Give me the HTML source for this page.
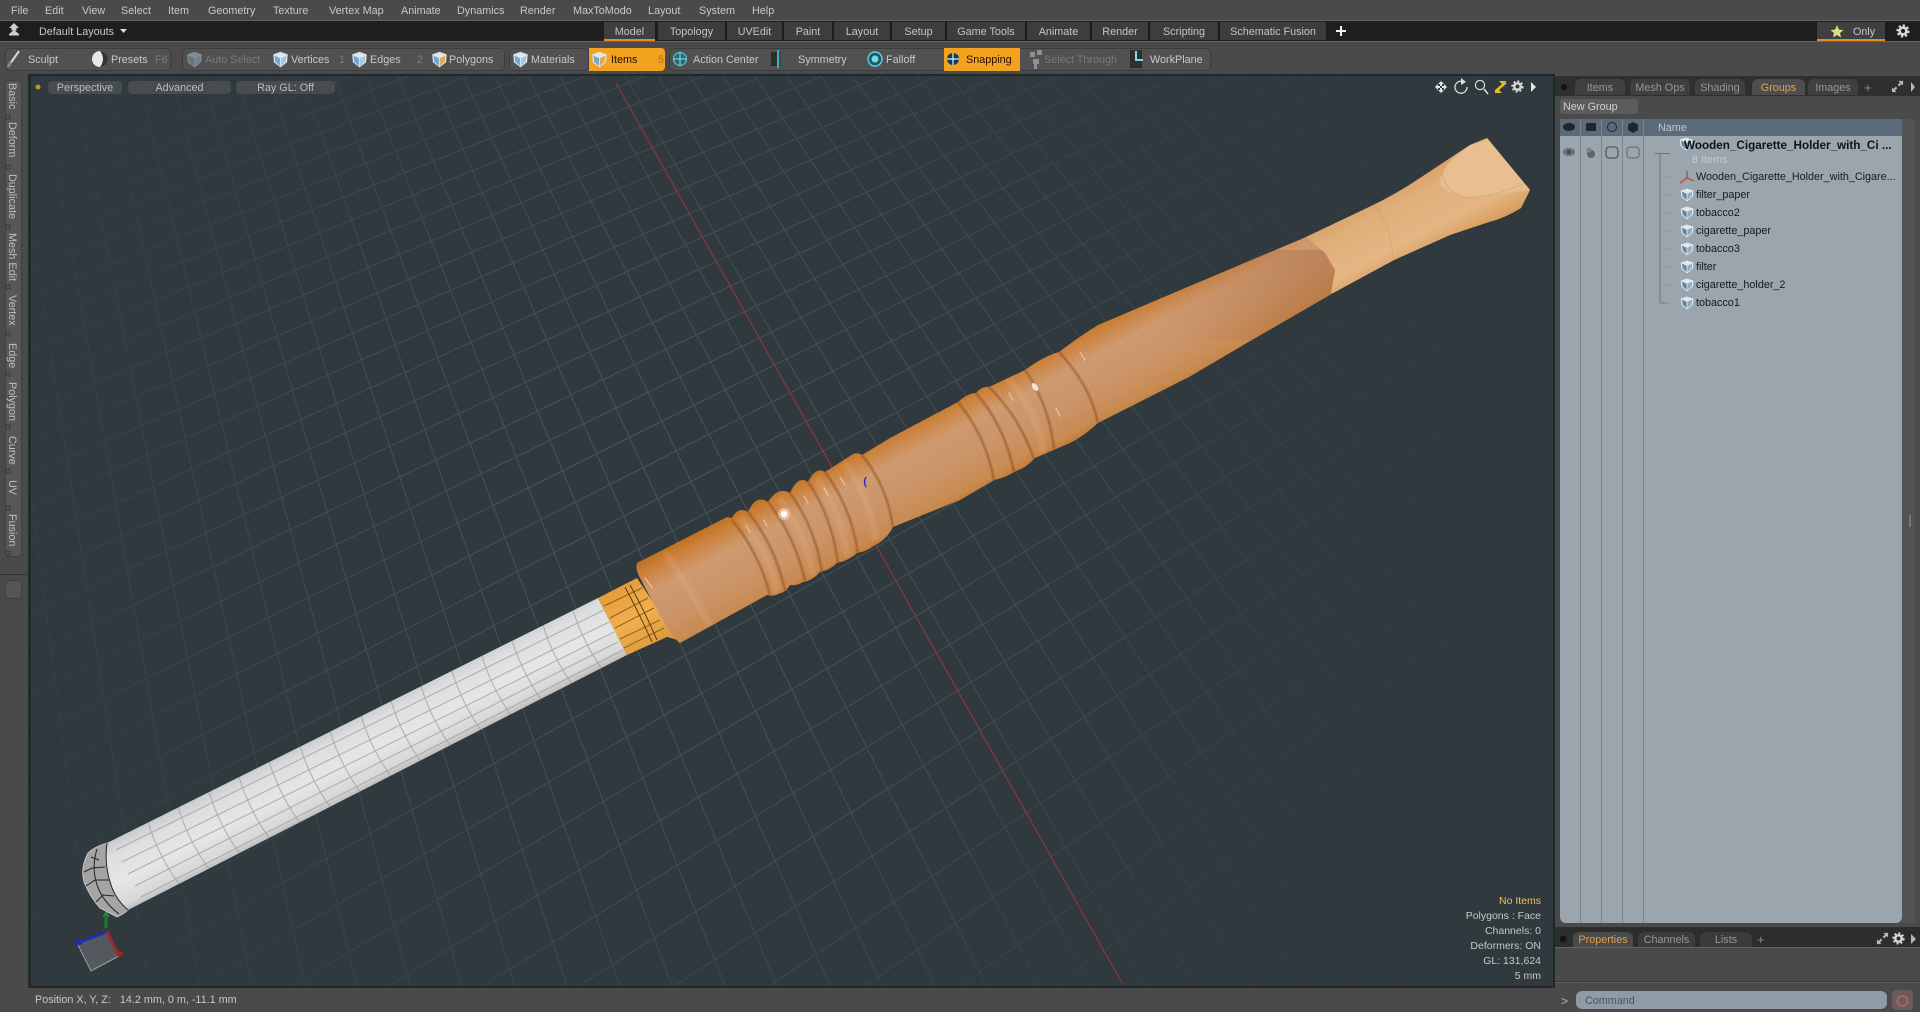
<!DOCTYPE html>
<html lang="en">
<head>
<meta charset="utf-8">
<title>Modo viewport</title>
<style>
html,body{margin:0;padding:0;background:#4a4a4a;width:1920px;height:1012px;overflow:hidden;}
#r{position:relative;width:1920px;height:1012px;overflow:hidden;background:#4a4a4a;font:10.8px/16px "Liberation Sans",sans-serif;color:#c8c8c8;}
.t{position:absolute;white-space:nowrap;line-height:16px;}
.b{position:absolute;box-sizing:border-box;}
.tab{position:absolute;top:22px;height:18px;background:#3d3d3d;color:#c4c4c4;text-align:center;line-height:20px;white-space:nowrap;}
.grp{position:absolute;top:48px;height:23px;background:#515151;border:1px solid #3c3c3c;border-radius:5px;box-sizing:border-box;}
.tb{top:52px;color:#c8c8c8;}
.dim{color:#7a7a7a;}
.vb{position:absolute;top:81px;height:13px;background:#464c4f;border-radius:4px;color:#bdbdbd;text-align:center;line-height:15px;white-space:nowrap;}
.side{position:absolute;left:4px;width:16px;writing-mode:vertical-rl;white-space:nowrap;line-height:16px;color:#c0c0c0;}
.ptab{position:absolute;background:#404040;color:#969696;text-align:center;border-radius:6px 6px 0 0;white-space:nowrap;}
.row{position:absolute;left:1696px;color:#141a1f;white-space:nowrap;line-height:16px;}
.i{right:379px;font-size:10.5px;}
svg{position:absolute;}
</style>
</head>
<body>
<div id="r">

<!-- viewport + model -->
<svg style="left:0;top:0" width="1920" height="1012" viewBox="0 0 1920 1012">
<defs>
<symbol id="cube" viewBox="0 0 16 16"><path d="M8 .8 14.8 3.2 14.2 10.6 8 15.4 1.8 10.6 1.2 3.2Z" fill="#dfe7ec"/><path d="M2.4 4.4 7.6 6.8 7.6 14.2 3 10.2Z" fill="#6fa8d2"/><path d="M13.6 4.4 8.4 6.8 8.4 14.2 13 10.2Z" fill="#a9c8dc"/></symbol>
<symbol id="cubeo" viewBox="0 0 16 16"><path d="M8 .8 14.8 3.2 14.2 10.6 8 15.4 1.8 10.6 1.2 3.2Z" fill="#dfe7ec"/><path d="M2.4 4.4 7.6 6.8 7.6 14.2 3 10.2Z" fill="#6fa8d2"/><path d="M13.6 4.4 8.4 6.8 8.4 14.2 13 10.2Z" fill="#e8a94e"/></symbol>
<symbol id="tcube" viewBox="0 0 14 14"><path d="M7 .6 13.4 2.6 12.8 8.8 7 13.4 1.6 9 .8 2.6Z" fill="#e3e9ed"/><path d="M2 3.6 6.6 5.6 6.6 12 2.8 8.6Z" fill="#5f87a6"/><path d="M12.2 3.6 7.4 5.6 7.4 12 11.6 8.6Z" fill="#8fadc2"/></symbol>
<symbol id="gear" viewBox="0 0 14 14"><circle cx="7" cy="7" r="5.3" fill="none" stroke="#d8d8d8" stroke-width="2.6" stroke-dasharray="2.1 2"/><circle cx="7" cy="7" r="3.4" fill="none" stroke="#d8d8d8" stroke-width="2.6"/></symbol>
<symbol id="exp" viewBox="0 0 14 14"><path d="M8 1H13V6L11.3 4.3 8.8 6.8 7.2 5.2 9.7 2.7ZM1 8V13H6L4.3 11.3 6.8 8.8 5.2 7.2 2.7 9.7Z" fill="#b8b8b8"/></symbol>
<clipPath id="vp"><rect x="31" y="76" width="1522" height="910"/></clipPath>
<radialGradient id="gf" gradientUnits="userSpaceOnUse" cx="680" cy="520" r="1000"><stop offset="0" stop-color="#fff"/><stop offset=".35" stop-color="#fff" stop-opacity=".75"/><stop offset=".6" stop-color="#fff" stop-opacity=".28"/><stop offset=".85" stop-color="#fff" stop-opacity=".08"/><stop offset="1" stop-color="#fff" stop-opacity=".04"/></radialGradient>
<mask id="gm" maskUnits="userSpaceOnUse" x="0" y="0" width="1920" height="1012"><rect width="1920" height="1012" fill="url(#gf)"/></mask>
<linearGradient id="wg" gradientUnits="userSpaceOnUse" x1="975" y1="383" x2="1025" y2="477"><stop offset="0" stop-color="#c0701f"/><stop offset=".1" stop-color="#cc8038"/><stop offset=".3" stop-color="#cf9a70"/><stop offset=".6" stop-color="#cc9569"/><stop offset=".85" stop-color="#c98a50"/><stop offset=".97" stop-color="#c2701f"/><stop offset="1" stop-color="#9a5a20"/></linearGradient>
<linearGradient id="mg" gradientUnits="userSpaceOnUse" x1="1385" y1="185" x2="1425" y2="262"><stop offset="0" stop-color="#d89c62"/><stop offset=".3" stop-color="#e0b07c"/><stop offset=".7" stop-color="#e4b683"/><stop offset="1" stop-color="#d69858"/></linearGradient>
<linearGradient id="dk" gradientUnits="userSpaceOnUse" x1="1150" y1="310" x2="1330" y2="215"><stop offset="0" stop-color="#8a4a20" stop-opacity="0"/><stop offset="1" stop-color="#8a4a20" stop-opacity=".28"/></linearGradient>
<linearGradient id="cg" gradientUnits="userSpaceOnUse" x1="340" y1="722" x2="374" y2="788"><stop offset="0" stop-color="#c8c8cb"/><stop offset=".2" stop-color="#dedee0"/><stop offset=".55" stop-color="#e6e6e7"/><stop offset=".85" stop-color="#d8d8d9"/><stop offset="1" stop-color="#b4b4b5"/></linearGradient>
<linearGradient id="fg" gradientUnits="userSpaceOnUse" x1="615" y1="590" x2="649" y2="650"><stop offset="0" stop-color="#e59c3a"/><stop offset=".5" stop-color="#f1b050"/><stop offset="1" stop-color="#dc9a3a"/></linearGradient>
<pattern id="grain" patternUnits="userSpaceOnUse" width="6" height="6" patternTransform="rotate(-27)"><rect x="0" width="1" height="6" fill="#7a4a1e"/></pattern>
<filter id="bl" x="-20%" y="-20%" width="140%" height="140%"><feGaussianBlur stdDeviation="0.9"/></filter>
<filter id="bl2" x="-20%" y="-20%" width="140%" height="140%"><feGaussianBlur stdDeviation="2.2"/></filter>
<clipPath id="cc"><path d="M107 843 598 598 627 655 128 910 116 900 111 885 104 865Z"/></clipPath>
<clipPath id="hc"><path id="hp" d="M637 563 727 517 732 518Q738 506 748 512 756 494 768 502 778 486 790 493 798 475 808 482 816 466 825 472L853 454Q858 452 862 455L890 438 958 402Q968 393 976 393 982 386 989 387L1025 370Q1044 356 1059 352 1080 336 1098 325L1197 283 1306 237 1367 208Q1395 195 1420 178L1470 145 1487 138 1530 190 1521 208Q1505 218 1489 222L1450 235 1394 260 1335 292 1252 340 1189 377 1098 423Q1084 436 1070 443L1035 458Q1026 468 1016 471 1005 478 994 480L960 500 893 527Q886 540 875 545 866 552 857 553 848 561 837 563 830 570 820 572 812 581 803 582 797 586 790 585 785 593 780 593 774 597 767 595L680 643Q672 638 657 610L640 578Q635 569 637 563Z"/></clipPath>
</defs>

<rect x="28" y="74" width="1527" height="914" fill="#1f292c"/>
<rect x="31" y="76" width="1522" height="910" fill="#30393d"/>
<g clip-path="url(#vp)">
<g mask="url(#gm)" fill="none" stroke="#4a565b" stroke-width="1">
<path d="M31 879L43 986M31 496L95 986M31 223L148 986M41 76L200 986M73 76L252 986M106 76L305 986M138 76L357 986M171 76L410 986M203 76L462 986M236 76L515 986M268 76L567 986M301 76L620 986M333 76L672 986M366 76L725 986M398 76L777 986M431 76L830 986M463 76L882 986M495 76L935 986M528 76L987 986M560 76L1040 986M593 76L1092 986M625 76L1145 986M658 76L1197 986M690 76L1250 986M723 76L1302 986M755 76L1355 986M787 76L1407 986M820 76L1460 986M852 76L1512 986M885 76L1553 970M917 76L1553 902M950 76L1553 838M982 76L1553 778M1015 76L1553 720M1047 76L1553 666M1079 76L1553 614M1112 76L1553 565M1144 76L1553 518M1177 76L1553 473M1209 76L1553 431M1242 76L1553 390M1274 76L1553 351M1307 76L1553 314M1339 76L1553 278M1371 76L1553 244M1404 76L1553 211M1436 76L1553 179M1469 76L1553 149M1501 76L1553 120M1534 76L1553 91"/>
<path d="M55 76L31 84M114 76L31 105M173 76L31 127M232 76L31 149M291 76L31 171M350 76L31 195M409 76L31 219M468 76L31 244M527 76L31 269M586 76L31 296M645 76L31 323M704 76L31 351M763 76L31 380M822 76L31 410M881 76L31 442M940 76L31 474M999 76L31 507M1058 76L31 542M1118 76L31 578M1177 76L31 615M1236 76L31 654M1295 76L31 694M1354 76L31 736M1413 76L31 779M1472 76L31 824M1531 76L31 871M1553 96L31 921M1553 129L31 972M1553 164L101 986M1553 200L197 986M1553 238L292 986M1553 278L388 986M1553 320L483 986M1553 364L579 986M1553 410L674 986M1553 459L769 986M1553 510L865 986M1553 564L960 986M1553 622L1056 986M1553 683L1151 986M1553 748L1247 986M1553 817L1342 986M1553 890L1437 986M1553 969L1533 986"/>
</g>
<path d="M616 83 1122 983" stroke="#8c3642" stroke-width="1.2" fill="none"/>

<!-- cigarette -->
<path d="M107 843 598 598 627 655 128 910 116 900 111 885 104 865Z" fill="url(#cg)"/>
<g clip-path="url(#cc)" fill="none" stroke="#9a9a9b" stroke-width="1" opacity=".75">
<path d="M116 850 604 610M122 862 609 622M128 874 614 632M135 886 618 642M141 897 623 650"/>
<path d="M148 822Q159 858 182 888M178 807Q189 843 212 873M209 792Q220 828 243 858M239 777Q250 813 273 843M269 761Q280 797 303 827M300 746Q311 782 334 812M330 731Q341 767 364 797M361 716Q372 752 395 782M391 701Q402 737 425 767M421 686Q432 722 455 752M452 671Q463 707 486 737M482 656Q493 692 516 722M512 640Q523 676 546 706M543 625Q554 661 577 691M573 610Q584 646 607 676"/>
</g>
<!-- cap -->
<path d="M107 843Q94 847 88 853 80 868 84 882 90 897 100 908L117 917Q124 914 128 910 116 900 111 885 104 865 107 843Z" fill="#a4a4a5" stroke="#cfcfcf" stroke-width=".8"/>
<path d="M107 843Q104 865 111 885 116 900 128 910M97 849Q90 872 100 892 106 904 119 914M84 872 92 868 105 867M86 886 95 880 109 880M96 902 103 895 114 896M91 857 99 860" fill="none" stroke="#222" stroke-width="1"/>
<!-- filter -->
<path d="M598 598 637 578 678 640 667 637 627 655Z" fill="url(#fg)"/>
<path d="M604 606 642 588M610 618 648 598M615 628 654 608M620 639 660 620M624 648 664 628" fill="none" stroke="#8e6018" stroke-width="1"/>
<path d="M625 587Q640 615 652 642M630 585Q645 612 657 640" fill="none" stroke="#5a3d10" stroke-width="1"/>
<!-- holder -->
<use href="#hp" fill="url(#wg)"/>
<g clip-path="url(#hc)">
<rect x="600" y="120" width="940" height="540" fill="url(#grain)" opacity=".05"/>
<path d="M1150 250H1340V340H1150Z" fill="url(#dk)"/>
<path d="M1306 237 1325 253 1335 270 1331 293 1600 293 1600 100 1306 100Z" fill="url(#mg)"/>
<path d="M1470 145Q1440 165 1440 185 1455 200 1485 196 1510 192 1530 190L1540 120Z" fill="#e8bf90" filter="url(#bl)"/>
<path d="M1442 172Q1445 195 1470 198 1500 195 1525 183M1375 205Q1395 235 1392 262" fill="none" stroke="#c99a68" stroke-width="1" opacity=".45"/>
<g fill="none" stroke="#f0c8a0" stroke-width="6" opacity=".2" filter="url(#bl2)">
<path d="M740 516Q767 550 778 592M779 497Q805 532 813 576M816 477Q841 512 848 558M845 463Q870 497 876 540M1007 378Q1038 411 1044 454M665 552Q690 590 710 625"/>
</g>
<g fill="none" stroke="#7c3f12" stroke-width="2.2" opacity=".5" filter="url(#bl)">
<path d="M732 520Q759 553 770 595M748 512Q775 546 785 590M768 502Q795 536 805 581M790 493Q815 527 822 572M808 482Q832 517 838 563M825 472Q851 507 858 553M862 455Q887 486 893 527M958 402Q986 436 994 480M976 393Q1005 427 1014 472M989 387Q1020 418 1034 459M1025 370Q1049 404 1054 449M1059 352Q1090 385 1098 423"/>
</g>
<g fill="none" stroke="#f5dcc2" stroke-width="1.4" stroke-linecap="round" opacity=".6">
<path d="M764 520 767 526M746 526 750 532M804 496 808 503M824 488 828 495M840 477 845 485M1009 393 1013 400M1056 408 1060 416M1080 352 1085 360M645 578 652 588"/>
</g>
</g>
<circle cx="784" cy="514" r="6" fill="#fff" opacity=".4"/>
<circle cx="784" cy="514" r="3.2" fill="#fff"/>
<ellipse cx="1035" cy="387" rx="2.4" ry="4.5" transform="rotate(-35 1035 387)" fill="#fff" opacity=".8"/>
<path d="M866 477Q863 482 866 487" stroke="#3a1fd0" stroke-width="1.4" fill="none"/>

<!-- gizmo -->
<path d="M106 913V928" stroke="#1d7a33" stroke-width="3"/>
<path d="M103 917 106 912 109 917" stroke="#1f9c3f" stroke-width="1" fill="none"/>
<path d="M77 943 107 932 119 956 91 971Z" fill="#53595c" stroke="#9aa0a2" stroke-width="1"/>
<path d="M107 932 77 943" stroke="#1d2fb8" stroke-width="3"/>
<path d="M76 938 83 944 75 946Z" fill="#1d2fb8"/>
<path d="M107 932 119 956" stroke="#9c2a2a" stroke-width="3"/>
<path d="M117 950 124 953 118 958Z" fill="#b0202a"/>
</g>

<!-- viewport top icons -->
<path d="M1441 81 1444 84H1442V86H1440V84H1438ZM1441 93 1438 90H1440V88H1442V90H1444ZM1435 87 1438 84V86H1440V88H1438V90ZM1447 87 1444 90V88H1442V86H1444V84Z" fill="#e2e2e2"/>
<path d="M1464 82A6 6 0 1 0 1467 87" fill="none" stroke="#dcdcdc" stroke-width="1.3"/><path d="M1461 78 1466 82 1461 85Z" fill="#dcdcdc"/>
<circle cx="1480" cy="85" r="4.6" fill="none" stroke="#dcdcdc" stroke-width="1.2"/><path d="M1484 89 1488 94" stroke="#dcdcdc" stroke-width="1.6"/>
<path d="M1495 93H1502L1499 90 1507 83 1504 82H1506V81H1499L1502 84 1495 90Z" fill="#e4c21a"/><path d="M1502 88 1506 90V84Z" fill="#2a3a9a"/>
<use href="#gear" x="1511" y="80" width="13" height="13"/>
<path d="M1531 82 1536 87 1531 92Z" fill="#e4e4e4"/>
<circle cx="38" cy="87" r="2.5" fill="#b59a2e"/>
</svg>

<!-- menu -->
<div class="b" style="left:0;top:20px;width:1920px;height:1px;background:#626262"></div>
<div class="t" style="left:11px;top:3px">File</div>
<div class="t" style="left:45px;top:3px">Edit</div>
<div class="t" style="left:82px;top:3px">View</div>
<div class="t" style="left:121px;top:3px">Select</div>
<div class="t" style="left:168px;top:3px">Item</div>
<div class="t" style="left:208px;top:3px">Geometry</div>
<div class="t" style="left:273px;top:3px">Texture</div>
<div class="t" style="left:329px;top:3px">Vertex Map</div>
<div class="t" style="left:401px;top:3px">Animate</div>
<div class="t" style="left:457px;top:3px">Dynamics</div>
<div class="t" style="left:520px;top:3px">Render</div>
<div class="t" style="left:573px;top:3px">MaxToModo</div>
<div class="t" style="left:648px;top:3px">Layout</div>
<div class="t" style="left:699px;top:3px">System</div>
<div class="t" style="left:752px;top:3px">Help</div>

<!-- layout bar -->
<div class="b" style="left:0;top:21px;width:1920px;height:20px;background:#1e1e1e"></div>
<div class="t" style="left:39px;top:24px">Default Layouts</div>
<div class="tab" style="left:604px;width:51px;background:#3f3f3f;border-bottom:2px solid #e8892a;height:17px;">Model</div>
<div class="tab" style="left:658px;width:67px">Topology</div>
<div class="tab" style="left:727px;width:55px">UVEdit</div>
<div class="tab" style="left:784px;width:48px">Paint</div>
<div class="tab" style="left:834px;width:56px">Layout</div>
<div class="tab" style="left:892px;width:53px">Setup</div>
<div class="tab" style="left:947px;width:78px">Game Tools</div>
<div class="tab" style="left:1027px;width:63px">Animate</div>
<div class="tab" style="left:1092px;width:56px">Render</div>
<div class="tab" style="left:1150px;width:68px">Scripting</div>
<div class="tab" style="left:1220px;width:106px">Schematic Fusion</div>
<div class="tab" style="left:1817px;width:68px;height:17px;background:#3f3f3f;border-bottom:2px solid #e8892a;text-align:left;text-indent:36px">Only</div>
<svg style="left:0;top:0" width="1920" height="42"><path d="M9 28 14 23 19 28H16.5V30.5H11.5V28ZM9 34 14 30 19 34V35.5H9Z" fill="#cfcfcf"/><path d="M120 29 127 29 123.5 33Z" fill="#ddd"/><path d="M1336 31H1346M1341 26V36" stroke="#f0f0f0" stroke-width="2"/><path d="M1837 25 1839 29.6 1843.5 30 1840 33 1841 37.5 1837 35 1833 37.5 1834 33 1830.5 30 1835 29.6Z" fill="#dcdc88"/><use href="#gear" x="1896" y="24" width="14" height="14"/></svg>

<!-- toolbar groups -->
<div class="b" style="left:0;top:41px;width:1920px;height:1px;background:#666"></div>
<div class="grp" style="left:5px;width:166px"></div>
<div class="grp" style="left:182px;width:323px"></div>
<div class="grp" style="left:509px;width:80px"></div>
<div class="grp" style="left:669px;width:542px"></div>
<div class="b" style="left:589px;top:48px;width:76px;height:23px;background:#f2a21e;border-radius:0 4px 4px 0;"></div>
<div class="b" style="left:944px;top:48px;width:76px;height:23px;background:#f2a21e;"></div>
<svg style="left:0;top:0" width="1300" height="76">
<path d="M10 64 19 51" stroke="#d8d8d8" stroke-width="2"/><path d="M8 67 11 62" stroke="#888" stroke-width="3"/>
<circle cx="100" cy="59" r="8" fill="#e8e8e8"/><path d="M100 51A8 8 0 0 1 100 67Q106 59 100 51Z" fill="#333"/>
<use href="#cube" x="186" y="50" width="17" height="19" opacity=".4"/>
<use href="#cube" x="272" y="50" width="17" height="19"/>
<use href="#cube" x="351" y="50" width="17" height="19"/>
<use href="#cubeo" x="431" y="50" width="17" height="19"/>
<use href="#cube" x="512" y="50" width="17" height="19"/>
<use href="#cubeo" x="591" y="50" width="17" height="19"/>
<circle cx="680" cy="59" r="6.5" fill="#2a6a78" stroke="#56c0d0" stroke-width="1.2"/><path d="M673 59H687M680 52V66" stroke="#8fe0ea" stroke-width="1"/>
<rect x="771" y="52" width="6" height="14" fill="#2d2d2d"/><rect x="777" y="50" width="2" height="18" fill="#36b4c4"/><rect x="779" y="52" width="2" height="14" fill="#444"/>
<circle cx="875" cy="59" r="7" fill="#1c5a68" stroke="#5fd0e0" stroke-width="1.4"/><circle cx="875" cy="59" r="3.5" fill="#6fdce8"/>
<circle cx="953" cy="59" r="6" fill="#123c5a"/><path d="M947 59H959M953 53V65" stroke="#e0f0f4" stroke-width="1.2"/>
<path d="M1030 52h5v5h-5zM1037 50h5v5h-5zM1033 59h6v5h-6zM1034 64h3v5h-3z" fill="#8a9094"/>
<rect x="1130" y="50" width="12" height="18" fill="#2f2f2f"/><path d="M1136 51V60H1143" stroke="#7fd8e8" stroke-width="2" fill="none"/>
</svg>
<div class="t tb" style="left:28px">Sculpt</div>
<div class="t tb" style="left:111px">Presets</div>
<div class="t tb dim" style="left:155px">F6</div>
<div class="t tb dim" style="left:205px">Auto Select</div>
<div class="t tb" style="left:291px">Vertices</div>
<div class="t tb dim" style="left:339px">1</div>
<div class="t tb" style="left:370px">Edges</div>
<div class="t tb dim" style="left:417px">2</div>
<div class="t tb" style="left:449px">Polygons</div>
<div class="t tb" style="left:531px">Materials</div>
<div class="t tb" style="left:611px;color:#1c1205">Items</div>
<div class="t tb" style="left:658px;color:#a8701a">5</div>
<div class="t tb" style="left:693px">Action Center</div>
<div class="t tb" style="left:798px">Symmetry</div>
<div class="t tb" style="left:886px">Falloff</div>
<div class="t tb" style="left:966px;color:#2a0a00">Snapping</div>
<div class="t tb dim" style="left:1044px">Select Through</div>
<div class="t tb" style="left:1150px">WorkPlane</div>

<!-- viewport buttons -->
<div class="vb" style="left:48px;width:74px">Perspective</div>
<div class="vb" style="left:128px;width:103px">Advanced</div>
<div class="vb" style="left:236px;width:99px">Ray GL: Off</div>

<!-- viewport info -->
<div class="t i" style="top:893px;color:#f0c050">No Items</div>
<div class="t i" style="top:908px">Polygons : Face</div>
<div class="t i" style="top:923px">Channels: 0</div>
<div class="t i" style="top:938px">Deformers: ON</div>
<div class="t i" style="top:953px">GL: 131,624</div>
<div class="t i" style="top:968px">5 mm</div>

<!-- left strip -->
<div class="b" style="left:5px;top:80px;width:17px;height:477px;background:#575757;border-radius:4px;border:1px solid #3f3f3f"></div>
<div class="side" style="top:83px">Basic</div>
<div class="side" style="top:122px">Deform</div>
<div class="side" style="top:174px">Duplicate</div>
<div class="side" style="top:233px">Mesh Edit</div>
<div class="side" style="top:295px">Vertex</div>
<div class="side" style="top:343px">Edge</div>
<div class="side" style="top:382px">Polygon</div>
<div class="side" style="top:436px">Curve</div>
<div class="side" style="top:480px">UV</div>
<div class="side" style="top:514px">Fusion</div>
<svg style="left:0;top:70px" width="28" height="540"><g fill="none" stroke="#3a3a3a"><rect x="6" y="45" width="4" height="4"/><rect x="6" y="95" width="4" height="4"/><rect x="6" y="155" width="4" height="4"/><rect x="6" y="215" width="4" height="4"/><rect x="6" y="262" width="4" height="4"/><rect x="6" y="302" width="4" height="4"/><rect x="6" y="355" width="4" height="4"/><rect x="6" y="399" width="4" height="4"/><rect x="6" y="436" width="4" height="4"/><rect x="6" y="481" width="4" height="4"/></g></svg>
<div class="b" style="left:0;top:574px;width:27px;height:1px;background:#333"></div>
<div class="b" style="left:5px;top:580px;width:17px;height:19px;background:#555;border-radius:4px;border:1px solid #3f3f3f"></div>

<!-- status -->
<div class="t" style="left:35px;top:992px;color:#c8c8c8">Position X, Y, Z:&nbsp;&nbsp; 14.2 mm, 0 m, -11.1 mm</div>

<!-- right panel -->
<div class="b" style="left:1555px;top:76px;width:365px;height:20px;background:#2f2f2f"></div>
<div class="ptab" style="left:1575px;top:79px;width:50px;height:16px;line-height:18px">Items</div>
<div class="ptab" style="left:1630px;top:79px;width:60px;height:16px;line-height:18px">Mesh Ops</div>
<div class="ptab" style="left:1695px;top:79px;width:50px;height:16px;line-height:18px">Shading</div>
<div class="ptab" style="left:1752px;top:79px;width:53px;height:16px;line-height:18px;background:#4e4e4e;color:#e0a04e">Groups</div>
<div class="ptab" style="left:1808px;top:79px;width:50px;height:16px;line-height:18px">Images</div>
<div class="t" style="left:1864px;top:80px;color:#8a8a8a;font-size:13px">+</div>
<svg style="left:1555px;top:76px" width="365" height="20"><circle cx="9" cy="11" r="3" fill="#141414"/><use href="#exp" x="336" y="4" width="13" height="13"/><path d="M356 6 360 11 356 16Z" fill="#b8b8b8"/></svg>
<div class="b" style="left:1560px;top:99px;width:78px;height:15px;background:#5c5c5c;border-radius:3px;color:#cfcfcf;line-height:17px;padding-left:3px">New Group</div>

<div class="b" style="left:1560px;top:119px;width:342px;height:804px;background:#9aa5ae;border-radius:0 0 6px 6px"></div>
<div class="b" style="left:1560px;top:119px;width:342px;height:17px;background:#5c6b79"></div>
<div class="b" style="left:1902px;top:119px;width:13px;height:804px;background:#535353"></div>
<div class="b" style="left:1909px;top:515px;width:2px;height:12px;background:#777"></div>
<div class="b" style="left:1580px;top:119px;width:1px;height:804px;background:#77848e"></div>
<div class="b" style="left:1601px;top:119px;width:1px;height:804px;background:#77848e"></div>
<div class="b" style="left:1622px;top:119px;width:1px;height:804px;background:#77848e"></div>
<div class="b" style="left:1643px;top:119px;width:1px;height:804px;background:#77848e"></div>
<div class="t" style="left:1658px;top:120px;color:#bcc6ce">Name</div>
<svg style="left:1560px;top:119px" width="342" height="200">
<g fill="#1f252a"><ellipse cx="9" cy="8" rx="6" ry="4"/><rect x="26" y="4" width="10" height="8" rx="1"/><circle cx="52" cy="8" r="4.5" fill="none" stroke="#1f252a"/><path d="M73 3 78 5.5V11L73 14 68 11V5.5Z"/></g>
<ellipse cx="9" cy="33" rx="6" ry="4" fill="#68727a"/><circle cx="9" cy="33" r="2" fill="#3e474e"/>
<circle cx="31" cy="35" r="4" fill="#5a646c"/><circle cx="29" cy="31" r="2.5" fill="#79838b"/>
<rect x="46" y="28" width="12" height="11" rx="3" fill="none" stroke="#3e474e"/>
<rect x="67" y="28" width="12" height="11" rx="3" fill="none" stroke="#5e6871"/>
<path d="M100 34.5V184M100 184H105M95 34.5H110" stroke="#6b757d" fill="none"/>
<path d="M105 58H112M105 76H112M105 94H112M105 112H112M105 130H112M105 148H112M105 166H112M105 184H112" stroke="#7b858d" stroke-dasharray="2 1.5" fill="none"/>
<use href="#tcube" x="119" y="18" width="14" height="14"/>
<path d="M127 52V59M127 59 120 64M127 59 134 62" stroke="#c05030" stroke-width="1.4" fill="none"/><path d="M127 52V59" stroke="#5a7a9a" stroke-width="1.4"/>
<use href="#tcube" x="120" y="69" width="14" height="14"/>
<use href="#tcube" x="120" y="87" width="14" height="14"/>
<use href="#tcube" x="120" y="105" width="14" height="14"/>
<use href="#tcube" x="120" y="123" width="14" height="14"/>
<use href="#tcube" x="120" y="141" width="14" height="14"/>
<use href="#tcube" x="120" y="159" width="14" height="14"/>
<use href="#tcube" x="120" y="177" width="14" height="14"/>
</svg>
<div class="t" style="left:1684px;top:138px;color:#0f1418;font-weight:bold;font-size:11.7px">Wooden_Cigarette_Holder_with_Ci ...</div>
<div class="t" style="left:1692px;top:152px;color:#c4ccd2">8 Items</div>
<div class="row" style="top:169px">Wooden_Cigarette_Holder_with_Cigare...</div>
<div class="row" style="top:187px">filter_paper</div>
<div class="row" style="top:205px">tobacco2</div>
<div class="row" style="top:223px">cigarette_paper</div>
<div class="row" style="top:241px">tobacco3</div>
<div class="row" style="top:259px">filter</div>
<div class="row" style="top:277px">cigarette_holder_2</div>
<div class="row" style="top:295px">tobacco1</div>

<!-- properties -->
<div class="b" style="left:1555px;top:927px;width:365px;height:20px;background:#2d2d2d"></div>
<div class="b" style="left:1555px;top:947px;width:365px;height:1px;background:#666"></div>
<div class="ptab" style="left:1573px;top:932px;width:60px;height:15px;line-height:16px;background:#4a4a4a;color:#e0a04e">Properties</div>
<div class="ptab" style="left:1638px;top:932px;width:57px;height:15px;line-height:16px;background:#3c3c3c">Channels</div>
<div class="ptab" style="left:1700px;top:932px;width:52px;height:15px;line-height:16px;background:#3c3c3c">Lists</div>
<div class="t" style="left:1757px;top:932px;color:#8a8a8a;font-size:13px">+</div>
<svg style="left:1555px;top:927px" width="365" height="20"><circle cx="8" cy="12" r="3.5" fill="#141414"/><use href="#exp" x="321" y="5" width="13" height="13"/><use href="#gear" x="337" y="5" width="13" height="13"/><path d="M356 7 361 12 356 17Z" fill="#b8b8b8"/></svg>
<div class="b" style="left:1555px;top:981px;width:365px;height:1px;background:#393939"></div>
<div class="b" style="left:1555px;top:982px;width:365px;height:1px;background:#5e5e5e"></div>
<div class="t" style="left:1561px;top:993px;color:#b8b8b8;font-size:12px">&gt;</div>
<div class="b" style="left:1576px;top:991px;width:311px;height:18px;background:#8f9ba6;border-radius:6px;color:#4a5560;line-height:20px;padding-left:9px">Command</div>
<div class="b" style="left:1892px;top:990px;width:21px;height:20px;background:#6a5c5e;border-radius:4px"></div>
<svg style="left:1892px;top:990px" width="21" height="20"><circle cx="10.5" cy="11" r="5" fill="none" stroke="#a86068" stroke-width="2"/></svg>
</div>
</body>
</html>
